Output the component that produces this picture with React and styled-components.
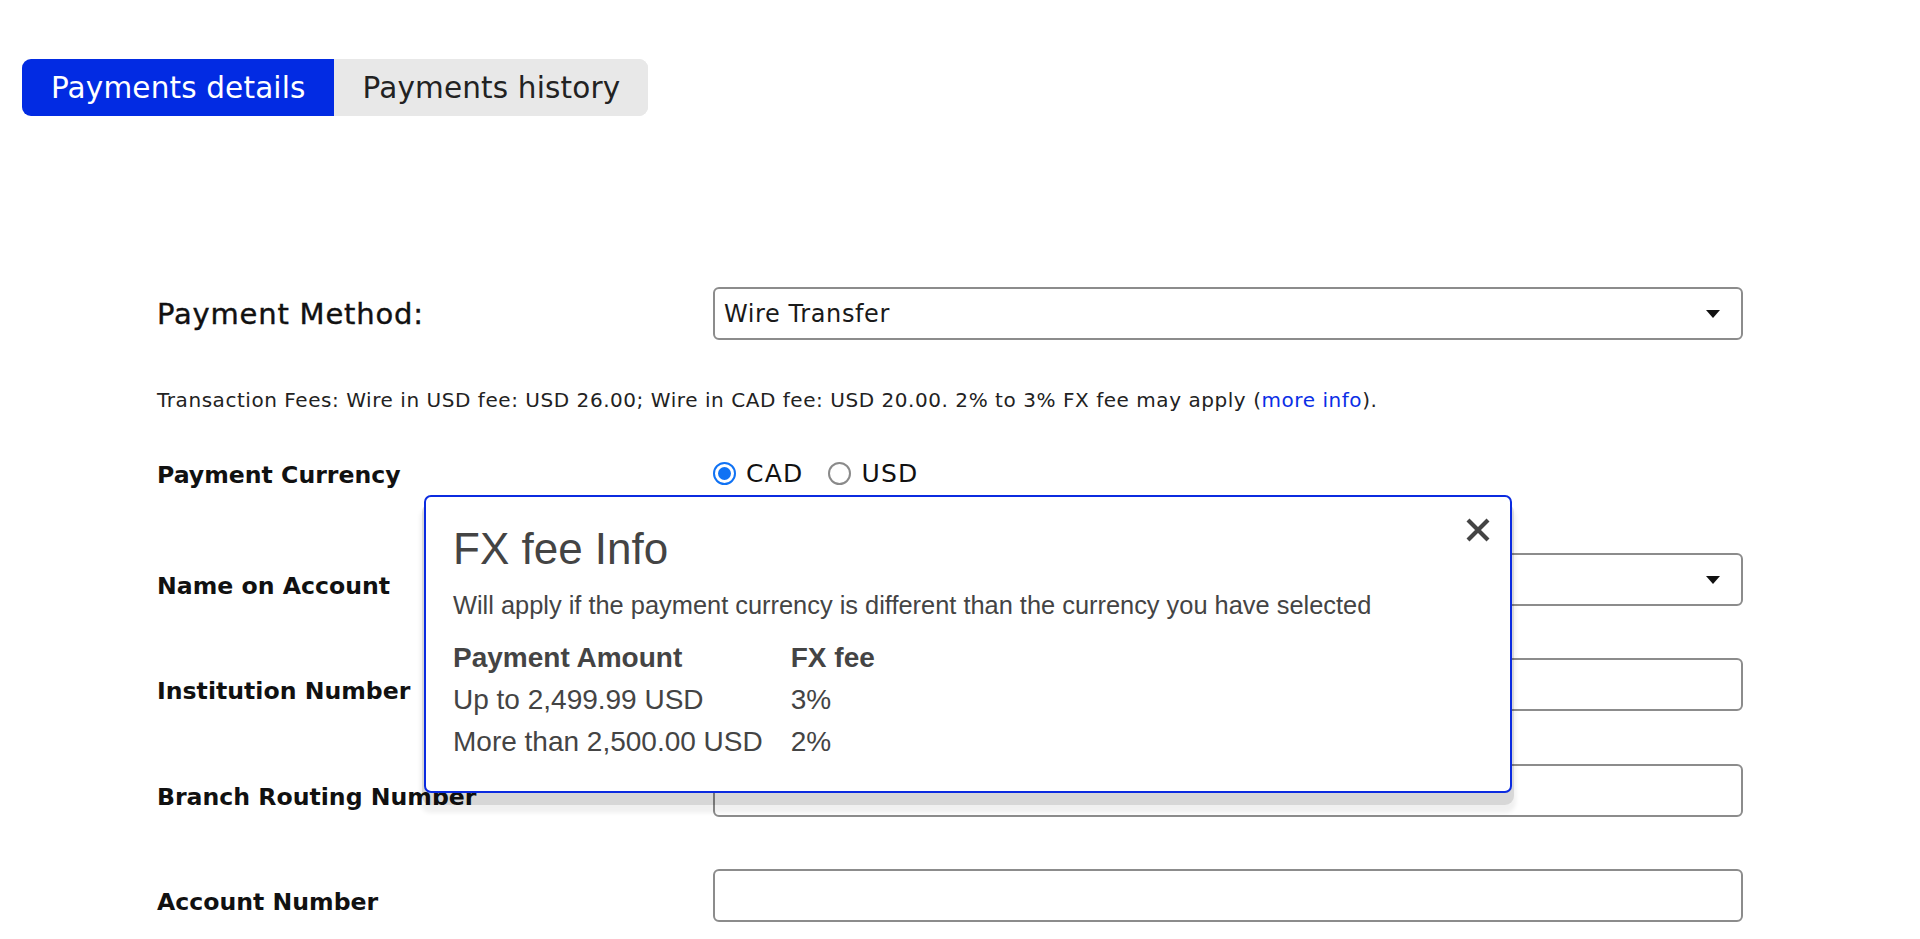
import React from "react";
import styled, { createGlobalStyle } from "styled-components";

const GlobalStyle = createGlobalStyle`
  body {
    margin: 0;
    background: #fff;
    font-family: "DejaVu Sans", "Liberation Sans", sans-serif;
    color: #111;
  }
`;

const Page = styled.div`
  position: relative;
  min-height: 939px;
  overflow: hidden;
`;

const TabBar = styled.div`
  display: inline-flex;
  margin: 59px 0 0 22px;
  border-radius: 9px;
  overflow: hidden;
  background: #e8e8e8;
`;

const Tab = styled.button`
  height: 57px;
  padding: 0 28px 0 29px;
  border: none;
  font-family: "DejaVu Sans", sans-serif;
  font-size: 29.5px;
  letter-spacing: 0.15px;
  background: ${(p) => (p.$active ? "#022be3" : "#e8e8e8")};
  color: ${(p) => (p.$active ? "#fff" : "#222")};
  cursor: pointer;
`;

const Form = styled.div`
  margin: 171px 0 0 157px;
  width: 1586px;
`;

const Row = styled.div`
  display: grid;
  grid-template-columns: 556px 1030px;
  align-items: center;
  margin-top: ${(p) => p.$top || 0}px;
`;

const Label = styled.div`
  font-size: ${(p) => (p.$strong ? "23.6px" : "29px")};
  font-weight: ${(p) => (p.$strong ? 700 : 400)};
  letter-spacing: ${(p) => (p.$strong ? "0" : "0.8px")};
  -webkit-text-stroke: ${(p) => (p.$strong ? "0" : "0.4px")};
  padding-top: ${(p) => (p.$strong ? "13px" : "0")};
  color: #111;
`;

const SelectBox = styled.div`
  box-sizing: border-box;
  height: 53px;
  border: 2px solid #8c8c8c;
  border-radius: 6px;
  display: flex;
  align-items: center;
  justify-content: space-between;
  padding: 0 20px 0 9px;
  font-size: 24px;
  letter-spacing: 0.6px;
  color: #1a1a1a;
`;

const TextInput = styled.input`
  box-sizing: border-box;
  height: 53px;
  width: 100%;
  border: 2px solid #8c8c8c;
  border-radius: 6px;
  padding: 0 10px;
  font-size: 24px;
  font-family: inherit;
  outline: none;
`;

const Note = styled.p`
  margin: 47px 0 0;
  font-size: 20px;
  letter-spacing: 0.55px;
  line-height: 26px;
  color: #222;

  a {
    color: #0a2ee6;
    text-decoration: none;
  }
`;

const RadioGroup = styled.div`
  display: flex;
  align-items: center;
  gap: 25px;
`;

const RadioOption = styled.label`
  display: flex;
  align-items: center;
  gap: 10px;
  font-size: 25px;
  letter-spacing: 1.2px;
  color: #111;
`;

const RadioDot = styled.span`
  box-sizing: border-box;
  width: 23px;
  height: 23px;
  border-radius: 50%;
  border: 2px solid ${(p) => (p.$checked ? "#1072f4" : "#8a8a8a")};
  display: inline-flex;
  align-items: center;
  justify-content: center;

  &::after {
    content: "";
    width: 13px;
    height: 13px;
    border-radius: 50%;
    background: ${(p) => (p.$checked ? "#1072f4" : "transparent")};
  }
`;

const Popover = styled.div`
  position: absolute;
  left: 424px;
  top: 495px;
  width: 1088px;
  height: 298px;
  box-sizing: border-box;
  border: 2px solid #0b2be0;
  border-radius: 7px;
  background: #fff;
  box-shadow: 0 10px 0 2px rgba(0, 0, 0, 0.1), 0 16px 4px 4px rgba(0, 0, 0, 0.06);
  padding: 27px 19px 26px 27px;
  font-family: "Liberation Sans", Arial, sans-serif;
  color: #444;
`;

const PopTitle = styled.h2`
  margin: 0;
  font-size: 44px;
  font-weight: 400;
  line-height: 1.15;
`;

const PopText = styled.p`
  margin: 15px 0 0;
  font-size: 25.4px;
  line-height: 30px;
`;

const FeeTable = styled.div`
  display: grid;
  grid-template-columns: auto auto;
  justify-content: start;
  column-gap: 28px;
  margin-top: 17px;
  font-size: 28px;
  line-height: 42px;
`;

const Cell = styled.div`
  font-weight: ${(p) => (p.$head ? 700 : 400)};
`;

const CloseButton = styled.button`
  position: absolute;
  top: 20px;
  right: 19px;
  width: 26px;
  height: 26px;
  padding: 0;
  border: none;
  background: none;
  cursor: pointer;
`;

const Caret = () => (
  <svg width="16" height="10" viewBox="0 0 16 10">
    <path d="M1 1h14L8 9z" fill="#111" />
  </svg>
);

const feeRows = [
  ["Up to 2,499.99 USD", "3%"],
  ["More than 2,500.00 USD", "2%"],
];

export default function App() {
  return (
    <Page>
      <GlobalStyle />
      <TabBar>
        <Tab $active>Payments details</Tab>
        <Tab>Payments history</Tab>
      </TabBar>

      <Form>
        <Row>
          <Label>Payment Method:</Label>
          <SelectBox>
            <span>Wire Transfer</span>
            <Caret />
          </SelectBox>
        </Row>

        <Note>
          Transaction Fees: Wire in USD fee: USD 26.00; Wire in CAD fee: USD 20.00. 2% to 3% FX fee may apply (
          <a href="#info">more info</a>).
        </Note>

        <Row $top={44}>
          <Label $strong style={{ paddingTop: 4 }}>Payment Currency</Label>
          <RadioGroup>
            <RadioOption>
              <RadioDot $checked />
              CAD
            </RadioOption>
            <RadioOption>
              <RadioDot />
              USD
            </RadioOption>
          </RadioGroup>
        </Row>

        <Row $top={64}>
          <Label $strong>Name on Account</Label>
          <SelectBox>
            <span />
            <Caret />
          </SelectBox>
        </Row>

        <Row $top={52}>
          <Label $strong>Institution Number</Label>
          <TextInput />
        </Row>

        <Row $top={53}>
          <Label $strong>Branch Routing Number</Label>
          <TextInput />
        </Row>

        <Row $top={52}>
          <Label $strong>Account Number</Label>
          <TextInput />
        </Row>
      </Form>

      <Popover>
        <PopTitle>FX fee Info</PopTitle>
        <CloseButton aria-label="Close">
          <svg width="26" height="26" viewBox="0 0 26 26">
            <path d="M3 3l20 20M23 3L3 23" stroke="#444" strokeWidth="4.2" />
          </svg>
        </CloseButton>
        <PopText>Will apply if the payment currency is different than the currency you have selected</PopText>
        <FeeTable>
          <Cell $head>Payment Amount</Cell>
          <Cell $head>FX fee</Cell>
          {feeRows.map(([amount, fee]) => (
            <React.Fragment key={amount}>
              <Cell>{amount}</Cell>
              <Cell>{fee}</Cell>
            </React.Fragment>
          ))}
        </FeeTable>
      </Popover>
    </Page>
  );
}
